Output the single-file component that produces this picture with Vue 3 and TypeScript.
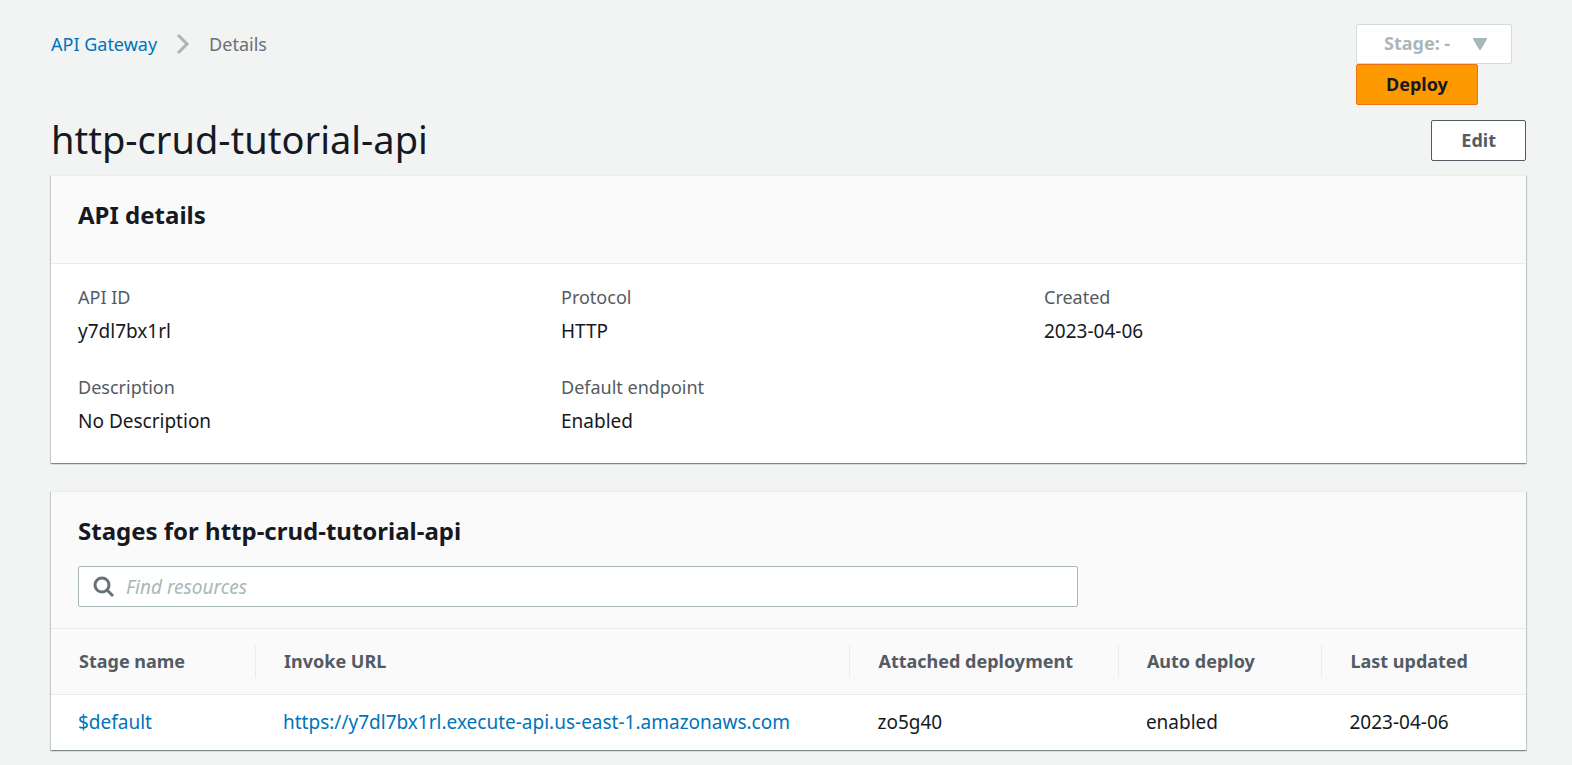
<script setup lang="ts">
import { ref } from 'vue'

interface Detail {
  label: string
  value: string
}

interface Stage {
  name: string
  url: string
  deployment: string
  autoDeploy: string
  updated: string
}

const apiName = 'http-crud-tutorial-api'
const query = ref('')
const selectedStage = ref('-')

const details: Detail[] = [
  { label: 'API ID', value: 'y7dl7bx1rl' },
  { label: 'Protocol', value: 'HTTP' },
  { label: 'Created', value: '2023-04-06' },
  { label: 'Description', value: 'No Description' },
  { label: 'Default endpoint', value: 'Enabled' },
]

const columns = ['Stage name', 'Invoke URL', 'Attached deployment', 'Auto deploy', 'Last updated']

const stages: Stage[] = [
  {
    name: '$default',
    url: 'https://y7dl7bx1rl.execute-api.us-east-1.amazonaws.com',
    deployment: 'zo5g40',
    autoDeploy: 'enabled',
    updated: '2023-04-06',
  },
]
</script>

<template>
  <main class="page">
    <header class="topbar">
      <nav class="crumbs" aria-label="Breadcrumbs">
        <a href="#apis" class="link">API Gateway</a>
        <svg class="chevron" viewBox="0 0 14 22" aria-hidden="true">
          <path d="M2 2 L11 11 L2 20" />
        </svg>
        <span class="current" aria-current="page">Details</span>
      </nav>
      <div class="actions">
        <div class="stage-picker">
          <select v-model="selectedStage" class="stage-select" aria-label="Stage" disabled>
            <option value="-">Stage: -</option>
          </select>
          <svg class="caret" viewBox="0 0 14 12" aria-hidden="true">
            <path d="M1 1 H13 L7 11 Z" />
          </svg>
        </div>
        <button type="button" class="btn btn-primary">Deploy</button>
      </div>
    </header>

    <div class="title-row">
      <h1>{{ apiName }}</h1>
      <button type="button" class="btn">Edit</button>
    </div>

    <section class="panel">
      <div class="panel-head details-head">
        <h2>API details</h2>
      </div>
      <dl class="details">
        <div v-for="item in details" :key="item.label">
          <dt>{{ item.label }}</dt>
          <dd>{{ item.value }}</dd>
        </div>
      </dl>
    </section>

    <section class="panel">
      <div class="panel-head stages-head">
        <h2>Stages for {{ apiName }}</h2>
        <label class="search">
          <svg class="magnifier" viewBox="0 0 22 22" aria-hidden="true">
            <circle cx="9" cy="9" r="7" />
            <path d="M14 14 L20 20" />
          </svg>
          <input v-model="query" type="text" placeholder="Find resources" aria-label="Find resources" />
        </label>
      </div>
      <table>
        <thead>
          <tr>
            <th v-for="column in columns" :key="column" scope="col"><span>{{ column }}</span></th>
          </tr>
        </thead>
        <tbody>
          <tr v-for="stage in stages" :key="stage.name">
            <td><a href="#stage" class="link">{{ stage.name }}</a></td>
            <td><a :href="stage.url" class="link">{{ stage.url }}</a></td>
            <td>{{ stage.deployment }}</td>
            <td>{{ stage.autoDeploy }}</td>
            <td>{{ stage.updated }}</td>
          </tr>
        </tbody>
      </table>
    </section>
  </main>
</template>

<style>
body {
  margin: 0;
  background: #f2f3f3;
}
</style>

<style scoped>
.page {
  box-sizing: border-box;
  padding: 24px 46px 14px 51px;
  color: #16191f;
  font-family: "Noto Sans", "Open Sans", sans-serif;
  font-size: 18px;
  line-height: 28px;
}

.link {
  color: #0073bb;
  text-decoration: none;
}

.topbar {
  display: flex;
  justify-content: space-between;
  align-items: flex-start;
}

.crumbs {
  display: flex;
  align-items: center;
  gap: 19px;
  padding-top: 6px;
}

.current {
  color: #687078;
}

.chevron {
  width: 14px;
  height: 22px;
  fill: none;
  stroke: #aab7b8;
  stroke-width: 3;
}

.actions {
  display: flex;
  flex-direction: column;
  align-items: flex-start;
  width: 170px;
}

.stage-picker {
  position: relative;
}

.stage-select {
  appearance: none;
  box-sizing: border-box;
  width: 156px;
  height: 40px;
  padding: 0 50px 2px 27px;
  border: 1px solid #d5dbdb;
  border-radius: 2px;
  background: #fff;
  color: #aab7b8;
  font: inherit;
  font-weight: 700;
  opacity: 1;
  display: block;
}

.caret {
  position: absolute;
  top: 14px;
  right: 25px;
  width: 14px;
  height: 12px;
  fill: #aab7b8;
  stroke: #aab7b8;
  stroke-width: 2;
  stroke-linejoin: round;
}

.btn {
  box-sizing: border-box;
  height: 41px;
  padding: 0 29px 2px;
  border: 1px solid #545b64;
  border-radius: 2px;
  background: #fff;
  color: #545b64;
  font: inherit;
  font-weight: 700;
}

.btn-primary {
  border-color: #ec7211;
  background: #ff9900;
  color: #16191f;
}

.title-row {
  display: flex;
  justify-content: space-between;
  align-items: flex-start;
  margin: 15px 0 14px;
}

h1 {
  margin: 0;
  font-size: 38px;
  font-weight: 400;
  line-height: 38px;
}

h2 {
  margin: 0;
  font-size: 24px;
  font-weight: 700;
  line-height: 32px;
}

.panel {
  border-top: 1px solid #eaeded;
  background: #fff;
  box-shadow: 0 1px 1px 0 rgba(0, 28, 36, 0.3), 1px 1px 1px 0 rgba(0, 28, 36, 0.15), -1px 1px 1px 0 rgba(0, 28, 36, 0.15);
}

.panel + .panel {
  margin-top: 28px;
}

.panel-head {
  border-bottom: 1px solid #eaeded;
  background: #fafafa;
}

.details-head {
  padding: 23px 27px 32px;
}

.stages-head {
  padding: 23px 27px 21px;
}

.details {
  display: grid;
  grid-template-columns: repeat(3, 1fr);
  gap: 28px;
  margin: 0;
  padding: 19px 27px 28px;
}

.details dt {
  color: #545b64;
}

.details dd {
  margin: 6px 0 0;
  font-size: 19px;
}

.search {
  box-sizing: border-box;
  display: flex;
  align-items: center;
  gap: 11px;
  width: 70.4%;
  height: 41px;
  margin-top: 19px;
  padding: 0 14px;
  border: 1px solid #aab7b8;
  border-radius: 2px;
  background: #fff;
}

.search input {
  flex: 1;
  min-width: 0;
  padding: 0;
  border: 0;
  outline: 0;
  background: transparent;
  color: #16191f;
  font: inherit;
  font-size: 19px;
}

.search input::placeholder {
  color: #aab7b8;
  font-style: italic;
  opacity: 1;
}

.magnifier {
  flex: none;
  width: 22px;
  height: 22px;
  fill: none;
  stroke: #687078;
  stroke-width: 3;
}

table {
  width: 100%;
  border-collapse: collapse;
  table-layout: fixed;
}

th {
  padding: 16px 0;
  border-bottom: 1px solid #eaeded;
  background: #fafafa;
  color: #545b64;
  font-weight: 700;
  text-align: left;
}

th span {
  display: block;
  padding-left: 28px;
  border-right: 1px solid #eaeded;
  line-height: 33px;
  white-space: nowrap;
}

th:last-child span {
  border-right: 0;
}

th:nth-child(1) {
  width: 13.9%;
}

th:nth-child(4),
th:nth-child(5) {
  width: 13.8%;
}

th:nth-child(3) {
  width: 18.2%;
}

td {
  padding: 13px 0 14px 27px;
  font-size: 19px;
}
</style>
